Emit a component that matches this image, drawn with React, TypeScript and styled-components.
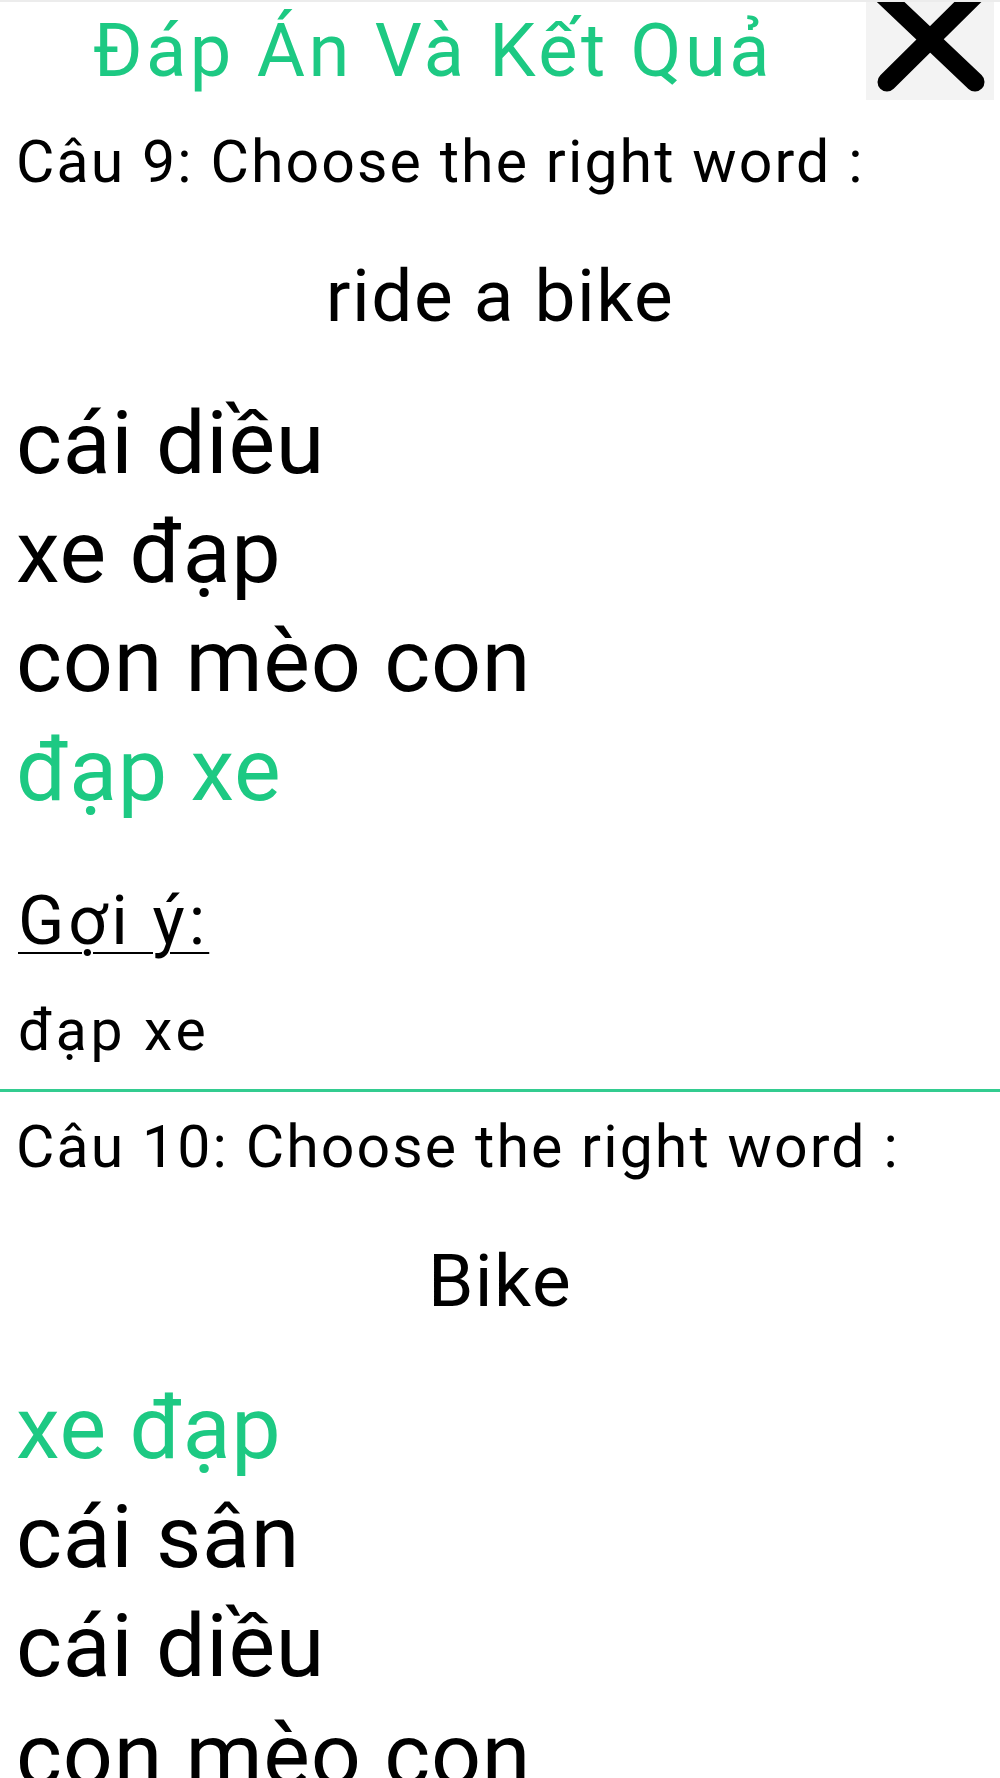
import styled, { createGlobalStyle } from "styled-components";

const GlobalStyle = createGlobalStyle`
    html, body {
        margin: 0;
        padding: 0;
        background: #ffffff;
    }
    body {
        font-family: Roboto, "Noto Sans", Arial, sans-serif;
        color: #000000;
    }
`;

type Question = {
    number: number;
    title: string;
    prompt: string;
    options: string[];
    answer: string;
    hint?: string;
};

const questions: Question[] = [
    {
        number: 9,
        title: "Choose the right word :",
        prompt: "ride a bike",
        options: ["cái diều", "xe đạp", "con mèo con", "đạp xe"],
        answer: "đạp xe",
        hint: "đạp xe",
    },
    {
        number: 10,
        title: "Choose the right word :",
        prompt: "Bike",
        options: ["xe đạp", "cái sân", "cái diều", "con mèo con"],
        answer: "xe đạp",
    },
];

export default function App() {
    return (
        <Page>
            <GlobalStyle />
            <Header>
                <Title>Đáp Án Và Kết Quả</Title>
                <CloseButton type="button" aria-label="Đóng">
                    <svg width="128" height="100" viewBox="0 0 128 100">
                        <g stroke="#000" strokeWidth="19" strokeLinecap="round">
                            <line x1="12" y1="-10" x2="109" y2="82" />
                            <line x1="114" y1="-10" x2="21" y2="82" />
                        </g>
                    </svg>
                </CloseButton>
            </Header>

            {questions.map((q, i) => (
                <Section key={q.number}>
                    {i > 0 && <Divider />}
                    <QuestionText>
                        Câu {q.number}: {q.title}
                    </QuestionText>
                    <Prompt>{q.prompt}</Prompt>
                    <OptionList>
                        {q.options.map((opt) => (
                            <Option key={opt} $correct={opt === q.answer}>
                                {opt}
                            </Option>
                        ))}
                    </OptionList>
                    {q.hint && (
                        <>
                            <HintLabel>Gợi ý:</HintLabel>
                            <HintText>{q.hint}</HintText>
                        </>
                    )}
                </Section>
            ))}
        </Page>
    );
}

const Page = styled.div`
    width: 1000px;
    height: 1778px;
    overflow: hidden;
    box-sizing: border-box;
    border-top: 2px solid #ececec;
`;

const Header = styled.div`
    display: flex;
    align-items: flex-start;
    height: 98px;
    margin-bottom: 22px;
    padding-right: 6px;
`;

const Title = styled.h1`
    flex: 1;
    margin: 0;
    text-align: center;
    font-size: 74px;
    font-weight: 400;
    line-height: 98px;
    letter-spacing: 3.5px;
    color: #1dc983;
`;

const CloseButton = styled.button`
    width: 128px;
    height: 98px;
    padding: 0;
    border: none;
    background: #f3f3f3;
    overflow: hidden;
    display: block;

    svg {
        display: block;
        margin-top: -2px;
    }
`;

const Section = styled.div`
    display: flex;
    flex-direction: column;
`;

const Divider = styled.div`
    height: 3px;
    background: #33cc90;
    margin-top: 23px;
    margin-bottom: 15px;
`;

const QuestionText = styled.div`
    padding: 0 16px;
    font-size: 59px;
    line-height: 80px;
    letter-spacing: 2.1px;
`;

const Prompt = styled.div`
    margin-top: 44px;
    text-align: center;
    font-size: 73px;
    line-height: 100px;
    letter-spacing: 1.5px;
`;

const OptionList = styled.div`
    display: flex;
    flex-direction: column;
    margin-top: 42px;
    padding: 0 16px;
`;

const Option = styled.div<{ $correct?: boolean }>`
    font-size: 88px;
    line-height: 109px;
    letter-spacing: 0.7px;
    color: ${(p) => (p.$correct ? "#1dc983" : "#000000")};
`;

const HintLabel = styled.div`
    margin-top: 57px;
    padding: 0 18px;
    font-size: 68px;
    line-height: 80px;
    letter-spacing: 4px;
    text-decoration: underline;
    text-decoration-thickness: 2px;
    text-underline-offset: 8px;
`;

const HintText = styled.div`
    margin-top: 35px;
    padding: 0 18px;
    font-size: 57px;
    line-height: 70px;
    letter-spacing: 3.7px;
`;
